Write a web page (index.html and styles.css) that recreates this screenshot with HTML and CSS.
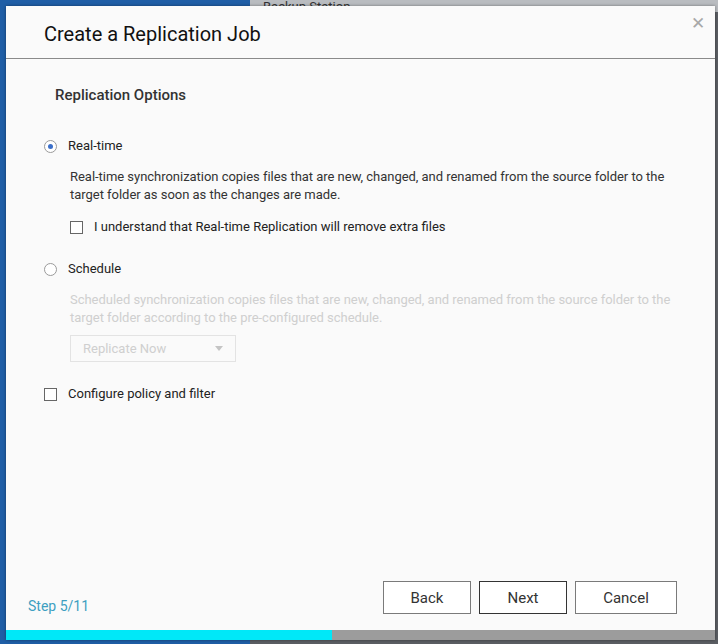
FILE: index.html
```html
<!DOCTYPE html>
<html lang="en">
<head>
    <meta charset="UTF-8">
    <title>Create a Replication Job</title>
    <link rel="stylesheet" href="styles.css">
</head>
<body>
    <div class="desktop">
        <div class="bg-window">
            <div class="bg-title">Backup Station</div>
        </div>

        <div class="dialog">
            <div class="dialog-header">
                <h1>Create a Replication Job</h1>
                <span class="close">&#x2715;</span>
            </div>

            <div class="dialog-body">
                <h3 class="section-title">Replication Options</h3>

                <label class="option">
                    <span class="radio checked"></span>
                    <span>Real-time</span>
                </label>
                <div class="option-detail">
                    <p class="desc">Real-time synchronization copies files that are new, changed, and renamed from the source folder to the target folder as soon as the changes are made.</p>
                    <label class="option sub">
                        <span class="check"></span>
                        <span>I understand that Real-time Replication will remove extra files</span>
                    </label>
                </div>

                <label class="option">
                    <span class="radio"></span>
                    <span>Schedule</span>
                </label>
                <div class="option-detail last">
                    <p class="desc disabled">Scheduled synchronization copies files that are new, changed, and renamed from the source folder to the target folder according to the pre-configured schedule.</p>
                    <div class="select">
                        <span>Replicate Now</span>
                        <span class="caret"></span>
                    </div>
                </div>

                <label class="option policy">
                    <span class="check"></span>
                    <span>Configure policy and filter</span>
                </label>
            </div>

            <div class="dialog-footer">
                <span class="step">Step 5/11</span>
                <div class="buttons">
                    <button>Back</button>
                    <button class="primary">Next</button>
                    <button class="cancel">Cancel</button>
                </div>
            </div>
            <div class="progress">
                <div class="progress-fill" style="width: 46%"></div>
            </div>
        </div>
    </div>
</body>
</html>
```

FILE: styles.css
```css
body {
    margin: 0;
    font-family: Roboto, "Liberation Sans", Arial, sans-serif;
    color: #222;
}
.desktop {
    position: relative;
    width: 718px;
    height: 644px;
    overflow: hidden;
    background: #1f5ea6;
}
.bg-window {
    position: absolute;
    left: 250px;
    top: 0;
    right: 0;
    bottom: 0;
    background: #5b5e63;
}
.bg-title {
    height: 12px;
    padding-left: 13px;
    background: #b9bcc0;
    font-size: 13px;
    line-height: 14px;
    color: #333;
    overflow: hidden;
}
.dialog {
    position: absolute;
    left: 6px;
    top: 6px;
    width: 709px;
    height: 634px;
    background: #fafafa;
    display: flex;
    flex-direction: column;
    box-shadow: 0 0 3px rgba(0, 0, 0, 0.4);
}
.dialog-header {
    height: 53px;
    border-bottom: 1px solid #8a8a8a;
    display: flex;
    align-items: center;
    justify-content: space-between;
    padding: 0 10px 0 38px;
    box-sizing: border-box;
}
.dialog-header h1 {
    margin: 0;
    font-size: 20px;
    font-weight: 400;
    color: #111;
    padding-top: 3px;
}
.close {
    align-self: flex-start;
    margin-top: 7px;
    font-size: 17px;
    color: #a8a8a8;
}
.dialog-body {
    flex: 1;
    padding: 26px 0 0 38px;
}
.section-title {
    margin: 0 0 32px 11px;
    font-size: 15px;
    font-weight: 500;
    color: #333;
    line-height: 20px;
}
.option {
    display: flex;
    align-items: center;
    gap: 11px;
    font-size: 13px;
    line-height: 18px;
    color: #222;
}
.option-detail {
    padding-left: 26px;
    margin: 13px 0 24px;
}
.option-detail.last {
    margin-bottom: 23px;
}
.desc {
    margin: 0 0 14px;
    width: 620px;
    font-size: 13px;
    line-height: 18px;
    color: #333;
    letter-spacing: -0.03px;
}
.desc.disabled {
    color: #cfcfcf;
    margin-bottom: 8px;
}
.radio {
    width: 11px;
    height: 11px;
    border: 1px solid #9a9a9a;
    border-radius: 50%;
    background: #fff;
    display: flex;
    align-items: center;
    justify-content: center;
}
.radio.checked::after {
    content: "";
    width: 5px;
    height: 5px;
    border-radius: 50%;
    background: #3b6fc9;
}
.check {
    width: 11px;
    height: 11px;
    border: 1px solid #666;
    background: #fff;
}
.select {
    border: 1px solid #e3e3e3;
    display: flex;
    align-items: center;
    justify-content: space-between;
    padding: 0 12px;
    box-sizing: border-box;
    width: 166px;
    height: 27px;
    font-size: 13px;
    color: #cfcfcf;
}
.caret {
    width: 0;
    height: 0;
    border-left: 4px solid transparent;
    border-right: 4px solid transparent;
    border-top: 5px solid #c4c4c4;
}
.dialog-footer {
    display: flex;
    align-items: center;
    justify-content: space-between;
    padding: 0 38px 16px 22px;
}
.step {
    font-size: 14px;
    color: #3d9fc1;
    padding-top: 17px;
}
.buttons {
    display: flex;
    gap: 8px;
}
button {
    height: 33px;
    padding: 0;
    background: #fff;
    border: 1px solid #7a7a7a;
    font-family: Roboto, "Liberation Sans", Arial, sans-serif;
    font-size: 15px;
    color: #333;
    width: 88px;
}
button.primary {
    border-color: #333;
}
button.cancel {
    width: 102px;
}
.progress {
    height: 10px;
    background: #9c9c9c;
}
.progress-fill {
    height: 100%;
    background: #00e8f8;
}
```
